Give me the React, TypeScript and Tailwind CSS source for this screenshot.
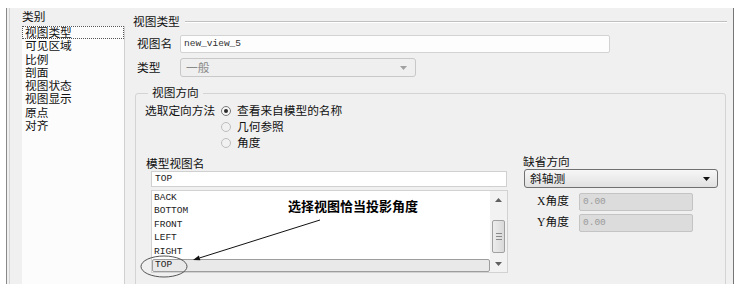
const cjk = "font-['Liberation_Sans','Noto_Sans_CJK_SC',sans-serif]"
const mono = "font-['Liberation_Mono','Noto_Sans_CJK_SC',monospace]"

const categories = ['视图类型', '可见区域', '比例', '剖面', '视图状态', '视图显示', '原点', '对齐']
const modelViews = ['BACK', 'BOTTOM', 'FRONT', 'LEFT', 'RIGHT', 'TOP']

function Radio({ checked }: { checked?: boolean }) {
  return (
    <span
      className={`flex h-[10px] w-[10px] items-center justify-center rounded-full border ${
        checked ? 'border-[#7a7a7a] bg-[#f6f6f6]' : 'border-[#bdbdbd] bg-[#f1f1f1]'
      }`}
    >
      {checked && <span className="h-[4px] w-[4px] rounded-full bg-[#2a2a2a]" />}
    </span>
  )
}

function Arrow({ dir, color }: { dir: 'up' | 'down'; color: string }) {
  return (
    <svg width="7" height="4" viewBox="0 0 7 4">
      <path d={dir === 'up' ? 'M0 4 L3.5 0 L7 4 Z' : 'M0 0 L7 0 L3.5 4 Z'} fill={color} />
    </svg>
  )
}

function Scrollbar() {
  return (
    <div className="flex w-[17px] flex-col bg-[#f2f2f2]">
      <div className="flex h-[17px] items-center justify-center">
        <Arrow dir="up" color="#606060" />
      </div>
      <div className="flex-1">
        <div className="mx-auto mt-[12px] flex h-[33px] w-[13px] flex-col items-center justify-center gap-[2px] rounded-[2px] border border-[#a0a0a0] bg-gradient-to-r from-[#ececec] to-[#dadada]">
          <span className="h-px w-[6px] bg-[#8a8a8a]" />
          <span className="h-px w-[6px] bg-[#8a8a8a]" />
          <span className="h-px w-[6px] bg-[#8a8a8a]" />
        </div>
      </div>
      <div className="flex h-[17px] items-center justify-center">
        <Arrow dir="down" color="#606060" />
      </div>
    </div>
  )
}

export default function App() {
  return (
    <div className={`h-[292px] w-[744px] bg-white pt-[8px] text-[#111] ${cjk}`}>
      <div className="ml-[6px] flex h-[276px] w-[728px] overflow-hidden border-x border-l-[#8a8a8a] border-r-[#767676] bg-[#f0f0f0]">
        {/* Category list */}
        <div className="flex w-[118px] shrink-0">
          <div className="ml-[2px] w-px bg-[#d4d4d4]" />
          <div className="ml-[12px] flex w-[103px] flex-col">
            <div className="mt-[2px] h-[14px] text-[11.7px] leading-[14px]">类别</div>
            <ul className="mt-[2px] flex-1 border-r border-[#d0d0d0] bg-[#fcfcfc]">
              {categories.map((c, i) => (
                <li
                  key={c}
                  className={`h-[13.3px] pl-[3px] text-[11.7px] leading-[13px] ${
                    i === 0 ? 'outline-1 -outline-offset-1 outline-dotted outline-[#555]' : ''
                  }`}
                >
                  {c}
                </li>
              ))}
            </ul>
          </div>
        </div>

        {/* Settings */}
        <div className="flex flex-1 flex-col pl-[8px] pr-[6px] pt-[7px] text-[11.7px]">
          <div className="flex h-[14px] items-center">
            <span className="leading-[14px]">视图类型</span>
            <div className="ml-[5px] flex-1 border-t border-b border-t-[#c0c0c0] border-b-white" />
          </div>

          <div className="mt-[6px] flex items-center pl-[4px]">
            <span className="w-[43px] leading-[14px]">视图名</span>
            <div className={`flex h-[18px] w-[430px] items-center rounded-[2px] border border-[#d2d2d2] bg-[#fdfdfd] pl-[3px] text-[9.5px] text-[#333] ${mono}`}>
              new_view_5
            </div>
          </div>

          <div className="mt-[5px] flex items-center pl-[4px]">
            <span className="w-[43px] leading-[14px]">类型</span>
            <div className="flex h-[19px] w-[236px] items-center justify-between rounded-[3px] border border-[#c8c8c8] bg-[#efefef] pl-[5px] pr-[8px] text-[#8a8a8a]">
              <span className="leading-[14px]">一般</span>
              <Arrow dir="down" color="#a0a0a0" />
            </div>
          </div>

          <fieldset className="mt-[9px] ml-[2px] mr-[1px] rounded-[3px] border border-[#d4d4d4] pb-[30px]">
            <legend className="ml-[12px] px-[4px] leading-[14px]">视图方向</legend>

            <div className="flex pl-[9px] pt-[3px]">
              <span className="w-[76px] leading-[16px]">选取定向方法</span>
              <div className="flex flex-col">
                <label className="flex h-[16px] items-center gap-[6px]">
                  <Radio checked />
                  <span>查看来自模型的名称</span>
                </label>
                <label className="flex h-[16px] items-center gap-[6px]">
                  <Radio />
                  <span>几何参照</span>
                </label>
                <label className="flex h-[16px] items-center gap-[6px]">
                  <Radio />
                  <span>角度</span>
                </label>
              </div>
            </div>

            <div className="mt-[4px] flex pl-[10px]">
              {/* Model view names */}
              <div className="relative w-[362px] pt-[2px]">
                <div className="h-[14px] leading-[14px]">模型视图名</div>
                <div className={`ml-[5px] flex h-[16px] w-[356px] items-center border border-[#d0d0d0] bg-white pl-[3px] text-[9.5px] text-[#222] ${mono}`}>
                  TOP
                </div>
                <div className="ml-[5px] mt-[3px] flex h-[83px] w-[357px] border border-[#d2d2d2] bg-white">
                  <ul className={`flex-1 text-[9.5px] text-[#222] ${mono}`}>
                    {modelViews.map((v) => (
                      <li
                        key={v}
                        className={`flex h-[13.5px] items-center pl-[2px] ${
                          v === 'TOP' ? 'rounded-[2px] border border-[#9d9d9d] bg-[#e9e9e9] pl-[1px]' : ''
                        }`}
                      >
                        {v}
                      </li>
                    ))}
                  </ul>
                  <Scrollbar />
                </div>

                {/* Annotation */}
                <span className="pointer-events-none absolute left-[142px] top-[44px] text-[13px] font-bold leading-[16px] text-black">
                  选择视图恰当投影角度
                </span>
                <svg
                  className="pointer-events-none absolute left-0 top-0 overflow-visible"
                  width="362"
                  height="130"
                  viewBox="0 0 362 130"
                >
                  <line x1="174" y1="65" x2="53.7" y2="102.9" stroke="#111" strokeWidth="1" />
                  <path d="M47 105 L54.4 105.3 L52.9 100.5 Z" fill="#111" />
                  <ellipse cx="18" cy="111.5" rx="23" ry="10.5" fill="none" stroke="#555" strokeWidth="1" />
                </svg>
              </div>

              {/* Default orientation */}
              <div className="ml-[15px] flex w-[196px] flex-col">
                <div className="h-[14px] leading-[14px]">缺省方向</div>
                <div className="ml-[1px] flex h-[19px] w-[194px] items-center justify-between rounded-[3px] border border-[#707070] bg-gradient-to-b from-[#f7f7f7] to-[#e1e1e1] pl-[5px] pr-[7px]">
                  <span className="leading-[14px]">斜轴测</span>
                  <Arrow dir="down" color="#111" />
                </div>
                <div className="mt-[5px] flex items-center pl-[14px]">
                  <span className="w-[42px] font-['Liberation_Serif','Noto_Sans_CJK_SC',serif] leading-[14px]">X角度</span>
                  <div className={`flex h-[18px] w-[114px] items-center rounded-[2px] border border-[#c4c4c4] bg-[#dcdcdc] pl-[3px] text-[9.5px] text-[#9a9a9a] ${mono}`}>
                    0.00
                  </div>
                </div>
                <div className="mt-[3px] flex items-center pl-[14px]">
                  <span className="w-[42px] font-['Liberation_Serif','Noto_Sans_CJK_SC',serif] leading-[14px]">Y角度</span>
                  <div className={`flex h-[18px] w-[114px] items-center rounded-[2px] border border-[#c4c4c4] bg-[#dcdcdc] pl-[3px] text-[9.5px] text-[#9a9a9a] ${mono}`}>
                    0.00
                  </div>
                </div>
              </div>
            </div>
          </fieldset>
        </div>
      </div>
    </div>
  )
}
